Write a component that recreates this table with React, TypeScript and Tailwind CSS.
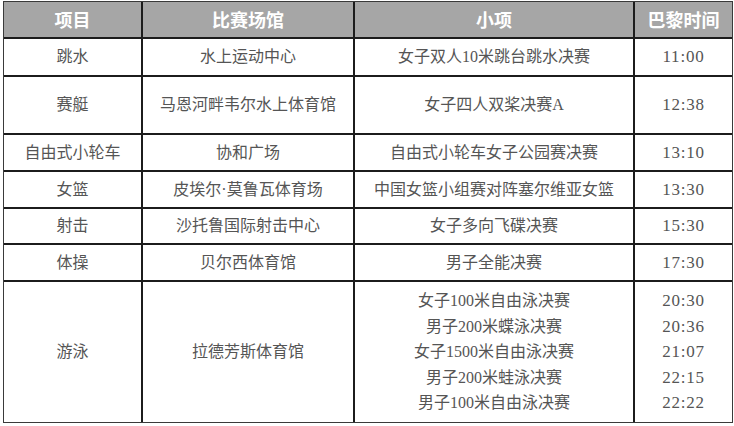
import React from "react";

type Row = {
  sport: string;
  venue: string;
  events: string[];
  times: string[];
  h: string;
};

const rows: Row[] = [
  { sport: "跳水", venue: "水上运动中心", events: ["女子双人10米跳台跳水决赛"], times: ["11:00"], h: "h-[36px]" },
  { sport: "赛艇", venue: "马恩河畔韦尔水上体育馆", events: ["女子四人双桨决赛A"], times: ["12:38"], h: "h-[56px]" },
  { sport: "自由式小轮车", venue: "协和广场", events: ["自由式小轮车女子公园赛决赛"], times: ["13:10"], h: "h-[35px]" },
  { sport: "女篮", venue: "皮埃尔·莫鲁瓦体育场", events: ["中国女篮小组赛对阵塞尔维亚女篮"], times: ["13:30"], h: "h-[35px]" },
  { sport: "射击", venue: "沙托鲁国际射击中心", events: ["女子多向飞碟决赛"], times: ["15:30"], h: "h-[34px]" },
  { sport: "体操", venue: "贝尔西体育馆", events: ["男子全能决赛"], times: ["17:30"], h: "h-[35px]" },
  {
    sport: "游泳",
    venue: "拉德芳斯体育馆",
    events: ["女子100米自由泳决赛", "男子200米蝶泳决赛", "女子1500米自由泳决赛", "男子200米蛙泳决赛", "男子100米自由泳决赛"],
    times: ["20:30", "20:36", "21:07", "22:15", "22:22"],
    h: "h-[140px]",
  },
];

const headers = ["项目", "比赛场馆", "小项", "巴黎时间"];

export default function App() {
  return (
    <div className="w-[734px] h-[426px] bg-white pl-[3px] pt-[1px]">
      <div className="w-[730px] border border-[#3a3a3a]">
        <div
          className="grid grid-cols-[137px_210px_278px_97px] gap-[2px] bg-[#1c1c1c] text-[16px] text-[#555555]"
          style={{ fontFamily: '"Liberation Serif", "Noto Sans CJK SC", serif' }}
        >
          {headers.map((t) => (
            <div
              key={t}
              className="h-[35px] bg-[#a6a6a6] flex items-center justify-center text-white text-[18px] font-bold"
              style={{ fontFamily: '"Noto Sans CJK SC", sans-serif' }}
            >
              {t}
            </div>
          ))}
          {rows.map((r) => (
            <React.Fragment key={r.sport}>
              <div className={`${r.h} bg-white flex items-center justify-center`}>{r.sport}</div>
              <div className={`${r.h} bg-white flex items-center justify-center`}>{r.venue}</div>
              <div className={`${r.h} bg-white flex flex-col items-center justify-center leading-[25.5px]`}>
                {r.events.map((e) => (
                  <span key={e}>{e}</span>
                ))}
              </div>
              <div className={`${r.h} bg-white flex flex-col items-center justify-center leading-[25.5px] text-[17px] tracking-[0.8px]`}>
                {r.times.map((t) => (
                  <span key={t}>{t}</span>
                ))}
              </div>
            </React.Fragment>
          ))}
        </div>
      </div>
    </div>
  );
}
